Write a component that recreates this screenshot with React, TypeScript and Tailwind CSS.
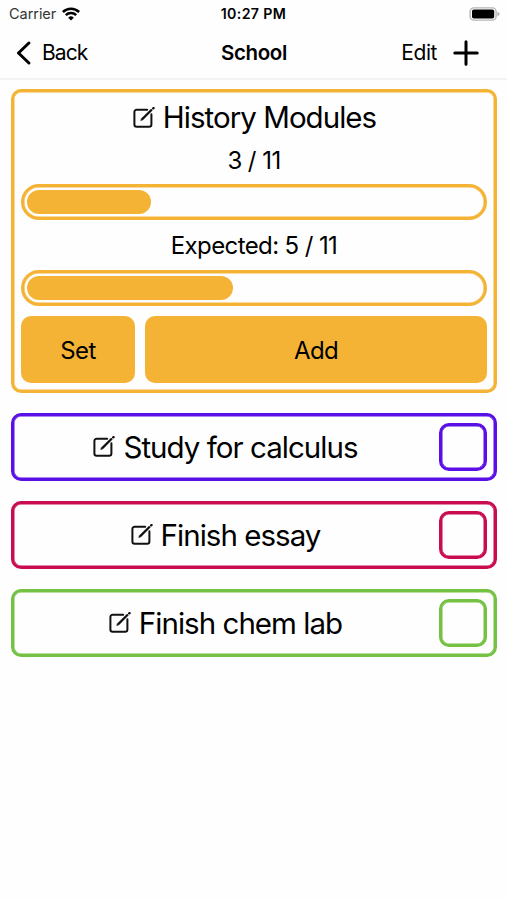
import React from 'react'

const orange = { border: 'border-[#f5b335] inset-ring-[#f5b335]', fill: 'bg-[#f5b335]' }

const tasks = [
    { title: 'Study for calculus', border: 'border-[#5a0fe6] inset-ring-[#5a0fe6]' },
    { title: 'Finish essay', border: 'border-[#c90c50] inset-ring-[#c90c50]' },
    { title: 'Finish chem lab', border: 'border-[#74c144] inset-ring-[#74c144]' },
]

function EditIcon() {
    return (
        <svg width="22" height="22" viewBox="0 0 22 22" fill="none" stroke="#111" className="shrink-0">
            <path d="M14.2 2.7H3.7a2.3 2.3 0 0 0-2.3 2.3v12.4a2.3 2.3 0 0 0 2.3 2.3h12.4a2.3 2.3 0 0 0 2.3-2.3V7.2" strokeWidth="2" strokeLinecap="round" />
            <path d="M9 12.4 18.9 2.5" strokeWidth="2.3" />
            <path d="M20.2 1.4l.4-.4" strokeWidth="2.3" strokeLinecap="round" />
            <path d="M7.7 13.6l.6-1.9 1.3 1.3z" fill="#111" strokeWidth=".5" />
        </svg>
    )
}

function StatusBar() {
    return (
        <div className="grid h-[27px] grid-cols-3 items-center pl-[9px] pr-[7px] text-[14.5px]">
            <div className="flex items-center gap-[6px] text-[#333]">
                <span className="tracking-[-0.05px]">Carrier</span>
                <svg width="18" height="14" viewBox="0 0 18 14" fill="none" stroke="#000" strokeWidth="2.5">
                    <path d="M.9 5a11.6 11.6 0 0 1 16.2 0" />
                    <path d="M3.8 8.1a7.4 7.4 0 0 1 10.4 0" />
                    <path d="M9 13.6 6.2 10.7a4 4 0 0 1 5.6 0z" fill="#000" stroke="none" />
                </svg>
            </div>
            <span className="-ml-[2px] text-center text-[14.2px] font-semibold tracking-[0.35px] whitespace-nowrap">10:27 PM</span>
            <svg width="31" height="14" viewBox="0 0 31 14" className="justify-self-end">
                <rect x="1.1" y=".9" width="26" height="12.2" rx="3.6" fill="#fff" stroke="#b5b5b5" strokeWidth="1.4" />
                <rect x="3" y="2.5" width="22.2" height="9" rx="1.8" fill="#000" />
                <path d="M28.4 4.8c1.6.5 2.2 1.2 2.2 2.2s-.6 1.7-2.2 2.2z" fill="#b5b5b5" />
            </svg>
        </div>
    )
}

function NavBar() {
    return (
        <div className="grid h-[53px] grid-cols-3 items-center border-b-2 border-[#f3f3f3] pl-[16px] pr-[28px] text-[21px]">
            <button className="flex items-center gap-[10px]">
                <svg width="16" height="24" viewBox="0 0 16 24" fill="none" stroke="#000" strokeWidth="3" strokeLinecap="round" strokeLinejoin="round">
                    <path d="M12.9 2 2.5 12l10.4 10" />
                </svg>
                <span className="pt-px tracking-[-0.9px]">Back</span>
            </button>
            <h1 className="ml-[13px] pt-px text-center text-[20.5px] font-semibold tracking-[-0.35px]">School</h1>
            <div className="flex items-center justify-end gap-[16px]">
                <button className="pt-px tracking-[-0.45px]">Edit</button>
                <svg width="26" height="26" viewBox="0 0 26 26" fill="none" stroke="#000" strokeWidth="3" strokeLinecap="round">
                    <path d="M13 1.8v22.4M1.8 13h22.4" />
                </svg>
            </div>
        </div>
    )
}

function Progress({ value, total }: { value: number; total: number }) {
    return (
        <div className={`h-[36px] rounded-full border-[3px] p-[3px] inset-ring-[0.5px] ${orange.border}`}>
            <div className={`h-full rounded-[12px] ${orange.fill}`} style={{ width: `${(value / total) * 100}%` }} />
        </div>
    )
}

export default function App() {
    return (
        <main className="min-h-screen bg-[#fefefe] font-['Inter',sans-serif] text-black">
            <StatusBar />
            <NavBar />
            <div className="flex flex-col gap-[20px] pt-[9px] pr-[10px] pl-[11px]">
                <section className={`flex h-[304px] flex-col rounded-[10px] border-[3px] px-[7px] inset-ring-[0.5px] ${orange.border}`}>
                    <div className="mt-[3px] ml-px flex h-[45px] items-center justify-center gap-[8px]">
                        <EditIcon />
                        <h2 className="text-[29.5px] tracking-[-0.97px]">History Modules</h2>
                    </div>
                    <p className="h-[44px] text-center text-[24px] leading-[42px] tracking-[-0.55px]">3 / 11</p>
                    <Progress value={3} total={11} />
                    <p className="h-[50px] text-center text-[24px] leading-[52px] tracking-[-0.6px]">Expected: 5 / 11</p>
                    <Progress value={5} total={11} />
                    <div className="mt-[10px] flex h-[67px] gap-[10px] text-[24px] tracking-[-0.6px]">
                        <button className={`w-[114px] rounded-[10px] pt-[2px] ${orange.fill}`}>Set</button>
                        <button className={`flex-1 rounded-[10px] pt-[2px] ${orange.fill}`}>Add</button>
                    </div>
                </section>
                {tasks.map((task) => (
                    <section key={task.title} className={`flex h-[68px] items-center gap-[10px] rounded-[10px] border-[3px] px-[7px] inset-ring-[0.5px] ${task.border}`}>
                        <div className="ml-px flex flex-1 items-center justify-center gap-[8px]">
                            <EditIcon />
                            <h2 className="text-[29.5px] tracking-[-0.97px]">{task.title}</h2>
                        </div>
                        <button aria-label={task.title} className={`size-[48px] rounded-[10px] border-[3px] inset-ring-[0.5px] ${task.border}`} />
                    </section>
                ))}
            </div>
        </main>
    )
}
